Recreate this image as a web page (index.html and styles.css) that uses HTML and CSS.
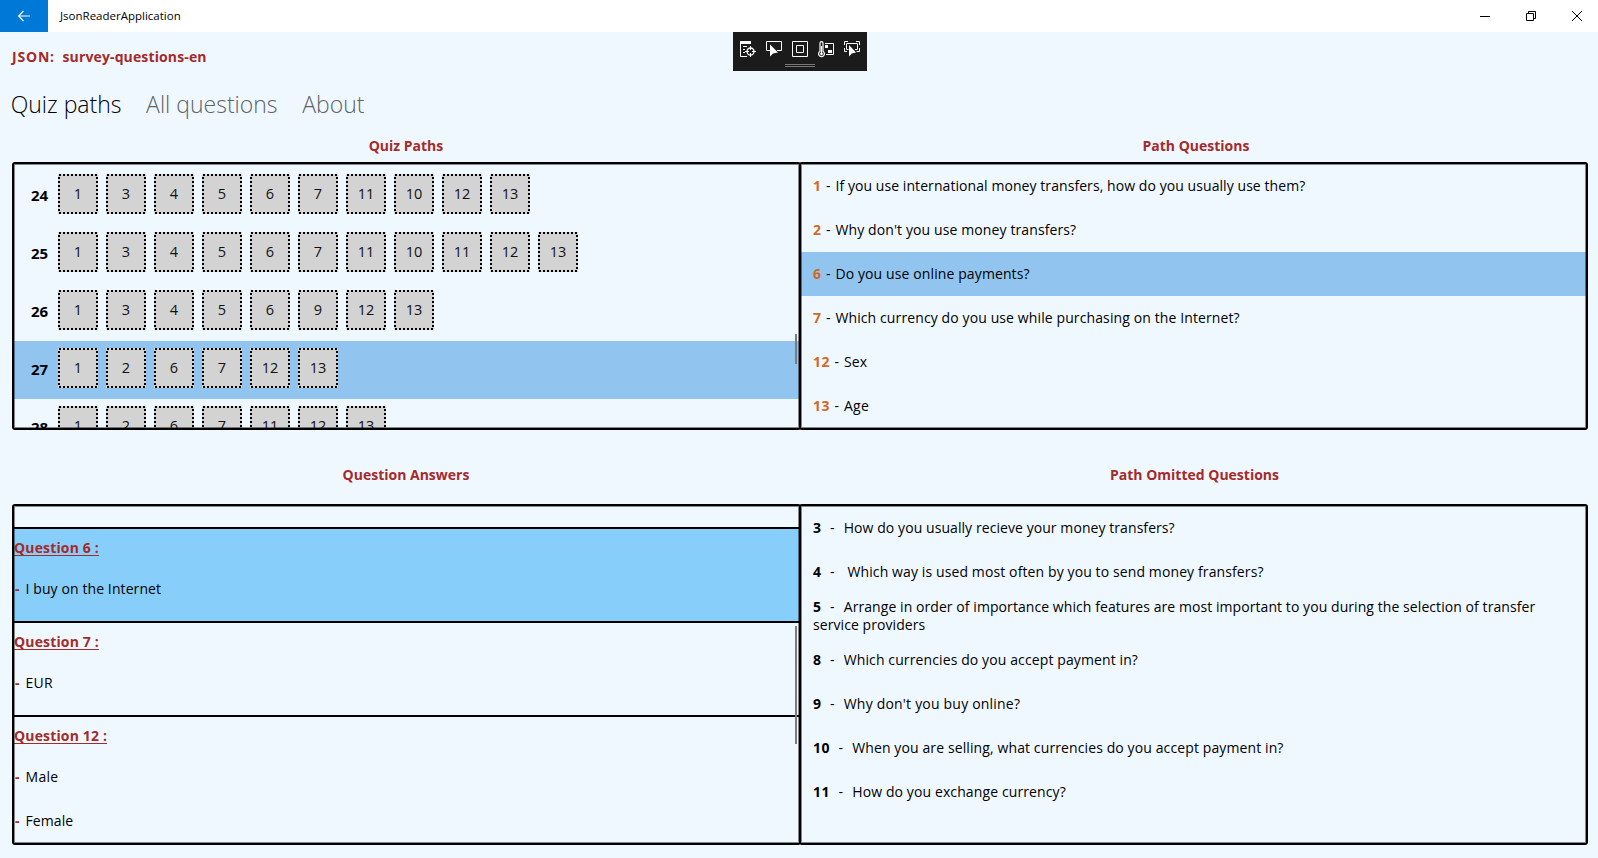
FILE: index.html
```html
<!DOCTYPE html>
<html lang="en">
<head>
<meta charset="utf-8">
<title>JsonReaderApplication</title>
<link rel="stylesheet" href="styles.css">
</head>
<body>
<header class="titlebar">
  <button class="back" aria-label="Back"><svg width="14" height="12" viewBox="0 0 14 12"><path d="M13 6H1.5M6.5 1L1.5 6L6.5 11" fill="none" stroke="#fff" stroke-width="1.1"/></svg></button>
  <span class="app-name">JsonReaderApplication</span>
  <div class="caption">
    <svg width="10" height="10"><path d="M0 5.5H10" stroke="#000"/></svg>
    <svg width="10" height="10"><path d="M.5 2.5H7.500V9.500H.5ZM2.500 2.500V.5H9.500V7.500H7.500" fill="none" stroke="#000"/></svg>
    <svg width="10" height="10"><path d="M0 0L10 10M10 0L0 10" stroke="#000"/></svg>
  </div>
</header>

<div class="debug-bar">
  <div class="debug-icons">
    <svg width="16" height="17"><path d="M0 0H11V3H0Z" fill="#fff"/><path d="M.5 3V15.500H7M3 5.500H7M3 8.500H5M3 11.500H5" fill="none" stroke="#fff"/><circle cx="10.500" cy="10.500" r="3.500" fill="none" stroke="#fff" stroke-width="1.300"/><path d="M10.500 5V9M10.500 12V16M5 10.500H9M12 10.500H16" stroke="#fff"/></svg>
    <svg width="16" height="17"><path d="M4 9.500H.5V.5H15.500V9.500H11" fill="none" stroke="#fff"/><path d="M4 3.500V15.500L7 12.500L12 11.500Z" fill="#fff"/></svg>
    <svg width="16" height="17"><path d="M.5 .5H15.500V15.500H.5ZM4.500 4.500H11.500V11.500H4.500Z" fill="none" stroke="#fff"/></svg>
    <svg width="16" height="17"><path d="M2 10.300V2.200Q2 .6 3.500 .6T5 2.200V10.300A2.900 2.900 0 1 1 2 10.300Z" fill="none" stroke="#fff" stroke-width="1.200"/><path d="M3.500 5V12" stroke="#fff"/><circle cx="3.500" cy="12.800" r="1.400" fill="#fff"/><path d="M7 2.500H15.500V13.500H8" fill="none" stroke="#fff"/><path d="M7 4H10V7H7ZM10 9H14V12H10Z" fill="#fff"/></svg>
    <svg width="16" height="17"><path d="M.5 4V.5H4M12 .5H15.500V4M.5 7V10.500H3M12.500 10.500H15.500V7M4.500 8.500H2.500V2.500H13.500V8.500H11" fill="none" stroke="#fff"/><path d="M5 4V15.500L7.800 12.500L12 11.500Z" fill="#fff"/></svg>
  </div>
  <div class="grip"></div>
</div>

<main>
  <div class="source"><span class="source-label">JSON:</span><span class="source-name">survey-questions-en</span></div>
  <nav class="tabs"><a class="tab active">Quiz paths</a><a class="tab">All questions</a><a class="tab">About</a></nav>

  <div class="grid">
    <h2 class="h-top">Quiz Paths</h2>
    <h2 class="h-top h-questions">Path Questions</h2>

    <section class="panel paths">
      <div class="path"><b>24</b><i>1</i><i>3</i><i>4</i><i>5</i><i>6</i><i>7</i><i>11</i><i>10</i><i>12</i><i>13</i></div>
      <div class="path"><b>25</b><i>1</i><i>3</i><i>4</i><i>5</i><i>6</i><i>7</i><i>11</i><i>10</i><i>11</i><i>12</i><i>13</i></div>
      <div class="path"><b>26</b><i>1</i><i>3</i><i>4</i><i>5</i><i>6</i><i>9</i><i>12</i><i>13</i></div>
      <div class="path selected"><b>27</b><i>1</i><i>2</i><i>6</i><i>7</i><i>12</i><i>13</i></div>
      <div class="path"><b>28</b><i>1</i><i>2</i><i>6</i><i>7</i><i>11</i><i>12</i><i>13</i></div>
      <span class="thumb thumb-paths"></span>
    </section>

    <section class="panel questions">
      <div class="row"><p class="snug"><b>1</b><s>-</s>If you use international money transfers, how do you usually use them?</p></div>
      <div class="row"><p><b>2</b><s>-</s>Why don't you use money transfers?</p></div>
      <div class="row selected"><p><b>6</b><s>-</s>Do you use online payments?</p></div>
      <div class="row"><p><b>7</b><s>-</s>Which currency do you use while purchasing on the Internet?</p></div>
      <div class="row"><p><b>12</b><s>-</s>Sex</p></div>
      <div class="row"><p class="wide"><b>13</b><s>-</s>Age</p></div>
    </section>

    <h2 class="h-bottom">Question Answers</h2>
    <h2 class="h-bottom h-omitted">Path Omitted Questions</h2>

    <section class="panel answers">
      <div class="answer highlighted"><h3>Question 6 :</h3><p class="loose"><b>-</b>I buy on the Internet</p></div>
      <div class="answer"><h3>Question 7 :</h3><p class="wide"><b>-</b>EUR</p></div>
      <div class="answer"><h3>Question 12 :</h3><p class="wide"><b>-</b>Male</p><p class="loose"><b>-</b>Female</p></div>
      <span class="thumb thumb-answers"></span>
    </section>

    <section class="panel omitted">
      <div class="row"><p class="snug"><b>3</b><s>-</s>How do you usually recieve your money transfers?</p></div>
      <div class="row"><p><b>4</b><s>-</s>&nbsp;Which way is used most often by you to send money fransfers?</p></div>
      <div class="row"><p class="snug"><b>5</b><s>-</s>Arrange in order of importance which features are most important to you during the selection of transfer service providers</p></div>
      <div class="row"><p><b>8</b><s>-</s>Which currencies do you accept payment in?</p></div>
      <div class="row"><p class="roomy"><b>9</b><s>-</s>Why don't you buy online?</p></div>
      <div class="row"><p><b>10</b><s>-</s>When you are selling, what currencies do you accept payment in?</p></div>
      <div class="row"><p><b>11</b><s>-</s>How do you exchange currency?</p></div>
    </section>
  </div>
</main>
</body>
</html>
```
FILE: styles.css
```css
* { box-sizing: border-box; }
body {
  margin: 0;
  height: 858px;
  overflow: hidden;
  background: #f0f8ff;
  color: #000;
  font: 14px/18px "Open Sans", "Noto Sans", sans-serif;
}
h2, h3, p { margin: 0; }
svg { display: block; }

.titlebar { display: flex; align-items: center; height: 32px; background: #fff; }
.back {
  display: flex; align-items: center; justify-content: center;
  width: 48px; height: 32px; padding: 0 0 1px; border: 0; background: #0078d7;
}
.app-name { margin-left: 12px; font-size: 11.5px; line-height: 16px; }
.caption { display: flex; gap: 36px; margin-left: auto; padding-right: 16px; }

.debug-bar {
  position: absolute; left: 733px; top: 32px;
  width: 134px; height: 39px; padding: 9px 7px 0; background: #1b1b1b;
}
.debug-icons { display: flex; gap: 10px; }
.grip {
  width: 30px; height: 3px; margin: 6px 0 0 45px;
  border-top: 1px solid #777; border-bottom: 1px solid #777;
}

main { padding: 16px 10px 0 12px; }
.source { display: flex; height: 18px; color: #a52a2a; font-weight: 700; }
.source-label { width: 50.5px; letter-spacing: .8px; }
.source-name { letter-spacing: .13px; }
.tabs { display: flex; gap: 24.6px; height: 32px; margin: 22px 0 16px -1.3px; font-size: 23px; line-height: 32px; font-weight: 300; }
.tab { color: #5f6366; }
.tab.active { color: #000; }

/* Two columns whose inner borders share the same two pixels */
.grid { display: grid; grid-template-columns: 787px 789px; grid-template-rows: 26px 268px 74px 341px; }
h2 { padding-left: 1px; color: #a52a2a; font-size: 14px; line-height: 18px; font-weight: 700; text-align: center; }
.h-top { padding-top: 1px; }
.h-bottom { padding-top: 36px; }
.h-questions { padding-left: 5px; }
.h-omitted { padding-left: 2px; }
.panel { position: relative; border: 2px solid #000; border-radius: 3px; overflow: hidden; }
.panel::after { content: ""; position: absolute; inset: 0; box-shadow: inset 0 0 0 1px rgba(0, 0, 0, .45); pointer-events: none; }
.paths, .answers { width: 789px; }
.selected { background: #91c5f0; }

.paths { padding-top: 3px; }
.path { display: flex; gap: 8px; height: 58px; padding-top: 7px; }
.path b { width: 36px; padding: 12px 0 0 17px; font-size: 15px; }
/* Square-dotted frame: dots of 2px every 4px */
.path i {
  width: 40px; height: 40px; color: #111; font-size: 14.5px; font-style: normal; line-height: 40px; text-align: center;
  background:
    repeating-linear-gradient(90deg, #000 0 2px, transparent 2px 4px) 1px 0 / 38px 2px no-repeat,
    repeating-linear-gradient(90deg, #000 0 2px, transparent 2px 4px) 1px 38px / 38px 2px no-repeat,
    repeating-linear-gradient(#000 0 2px, transparent 2px 4px) 0 3px / 2px 34px no-repeat,
    repeating-linear-gradient(#000 0 2px, transparent 2px 4px) 38px 3px / 2px 34px no-repeat,
    #d3d3d3;
}

.row { display: flex; align-items: center; height: 44px; padding: 0 12px; }
.row b { letter-spacing: .5px; }
.row s { display: inline-block; text-decoration: none; letter-spacing: 0; }
.row p { letter-spacing: .11px; }
.questions b { color: #d2691e; }
.questions s { margin: 0 5px 0 4.400px; }
.omitted s { margin: 0 9.200px 0 8.500px; }
.row p.snug { letter-spacing: .07px; }
.row p.roomy { letter-spacing: .2px; }
.loose { letter-spacing: .1px; }
.wide, .row p.wide { letter-spacing: .3px; }

.answers { padding-top: 21px; }
.answer { border-top: 2px solid #000; padding: 9px 0 10px; }
.answer h3 { height: 29px; color: #a52a2a; font-size: 14px; line-height: 20px; font-weight: 700; letter-spacing: .15px; text-decoration: underline; text-decoration-thickness: 1px; text-underline-offset: 2px; }
.answer p { height: 44px; padding-left: 1px; line-height: 44px; }
.answer b { display: inline-block; width: 10.500px; color: #a52a2a; }
.highlighted { background: #87cefa; }

.thumb { position: absolute; right: 2px; width: 2px; background: #7a7c7f; }
.thumb-paths { top: 170px; height: 30px; }
.thumb-answers { top: 120px; height: 118px; }
```
